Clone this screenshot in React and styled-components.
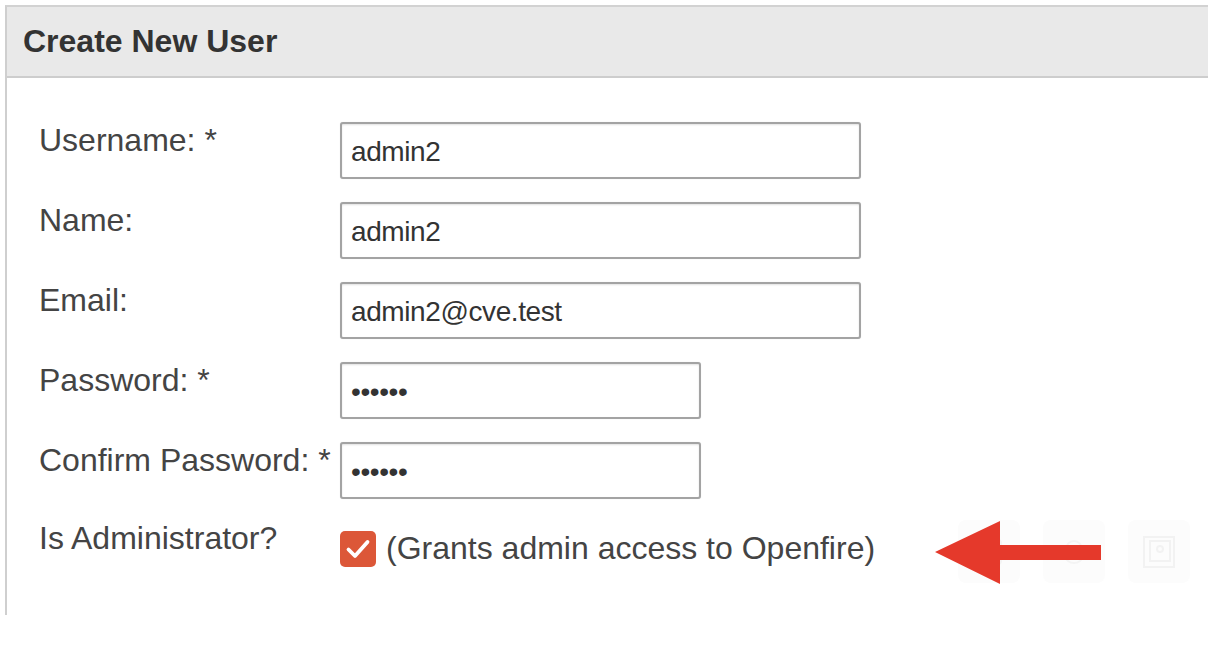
import React from 'react'
import styled, { createGlobalStyle } from 'styled-components'

const GlobalStyle = createGlobalStyle`
  html, body {
    margin: 0;
    padding: 0;
    background: #fff;
    font-family: "Liberation Sans", Arial, sans-serif;
  }
`

const Page = styled.div`
  width: 1208px;
  height: 654px;
  padding: 5px 0 0 5px;
  box-sizing: border-box;
  overflow: hidden;
`

const Panel = styled.div`
  width: 1240px;
  border-top: 2px solid #d2d2d2;
  border-left: 2px solid #cfcfcf;
`

const Head = styled.div`
  height: 71px;
  background-color: #e9e9e9;
  border-bottom: 2px solid #cdcdcd;
  display: flex;
  align-items: center;
  padding-left: 16px;
  box-sizing: border-box;
  font-size: 32px;
  font-weight: bold;
  color: #333;
`

const Body = styled.div`
  height: 537px;
  box-sizing: border-box;
  padding: 44px 0 0 32px;
`

const Form = styled.div`
  display: grid;
  grid-template-columns: 301px auto;
  row-gap: 23px;
  align-items: start;
`

const Label = styled.div`
  font-size: 32px;
  color: #444;
  line-height: 37px;
  margin-top: ${p => p.$offset || 0}px;
  white-space: nowrap;
`

const Field = styled.input`
  width: ${p => p.$width}px;
  height: 57px;
  box-sizing: border-box;
  border: 2px solid #a3a3a3;
  border-radius: 3px;
  box-shadow: inset 0 1px 2px rgba(0, 0, 0, 0.12), 0 0 1px rgba(0, 0, 0, 0.15);
  padding: 2px 9px 0;
  font-family: "Liberation Sans", Arial, sans-serif;
  font-size: 28px;
  letter-spacing: -0.4px;
  color: #333;
  outline: none;
  background: #fff;
  margin: 0;
`

const CheckRow = styled.div`
  display: flex;
  align-items: center;
  padding-top: 8px;
`

const Check = styled.span`
  width: 36px;
  height: 36px;
  border-radius: 5px;
  background: #dc5738;
  display: flex;
  align-items: center;
  justify-content: center;
  flex-shrink: 0;
`

const Hint = styled.span`
  margin-left: 10px;
  font-size: 32px;
  line-height: 37px;
  color: #444;
  white-space: nowrap;
`

/* faint toolbar buttons sitting behind the arrow; they don't add to the row height */
const IconStrip = styled.div`
  position: relative;
  display: flex;
  gap: 23px;
  margin: -10px 0 -16px 83px;
`

const GhostIcon = styled.div`
  width: 62px;
  height: 63px;
  border-radius: 8px;
  background: #fcfcfc;
  display: flex;
  align-items: center;
  justify-content: center;
`

const Arrow = styled.svg`
  position: absolute;
  left: -23px;
  top: 0;
`

const CheckMark = () => (
  <svg width="26" height="24" viewBox="0 0 26 24">
    <path d="M3.5 12.5 L10 19 L22.5 5" fill="none" stroke="#fff" strokeWidth="3.8" strokeLinecap="round" strokeLinejoin="round" />
  </svg>
)

const App = () => (
  <Page>
    <GlobalStyle />
    <Panel>
      <Head>Create New User</Head>
      <Body>
        <Form>
          <Label>Username: *</Label>
          <Field $width={521} type="text" value="admin2" readOnly />
          <Label>Name:</Label>
          <Field $width={521} type="text" value="admin2" readOnly />
          <Label>Email:</Label>
          <Field $width={521} type="text" value="admin2@cve.test" readOnly />
          <Label>Password: *</Label>
          <Field $width={361} type="password" value="admin2" readOnly />
          <Label>Confirm Password: *</Label>
          <Field $width={361} type="password" value="admin2" readOnly />
          <Label $offset={-2}>Is Administrator?</Label>
          <CheckRow>
            <Check><CheckMark /></Check>
            <Hint>(Grants admin access to Openfire)</Hint>
            <IconStrip>
              <GhostIcon>
                <svg width="34" height="34" viewBox="0 0 34 34" fill="none" stroke="#f4f4f4" strokeWidth="2">
                  <rect x="5" y="5" width="24" height="24" rx="3" />
                </svg>
              </GhostIcon>
              <GhostIcon>
                <svg width="34" height="34" viewBox="0 0 34 34" fill="none" stroke="#f4f4f4" strokeWidth="2">
                  <path d="M9 14 a8 8 0 0 1 16 0" />
                  <path d="M9 22 a8 6 0 0 0 16 0" />
                </svg>
              </GhostIcon>
              <GhostIcon>
                <svg width="40" height="40" viewBox="0 0 40 40" fill="none" stroke="#f2f2f2" strokeWidth="2">
                  <rect x="5" y="5" width="30" height="30" />
                  <rect x="11" y="9" width="20" height="20" />
                  <circle cx="21" cy="17" r="3" />
                </svg>
              </GhostIcon>
              <Arrow width="170" height="66" viewBox="0 0 170 66">
                <path d="M0 32 L65 1 L65 25 L166 25 L166 40 L65 40 L65 64 Z" fill="#e5392b" />
              </Arrow>
            </IconStrip>
          </CheckRow>
        </Form>
      </Body>
    </Panel>
  </Page>
)

export default App
